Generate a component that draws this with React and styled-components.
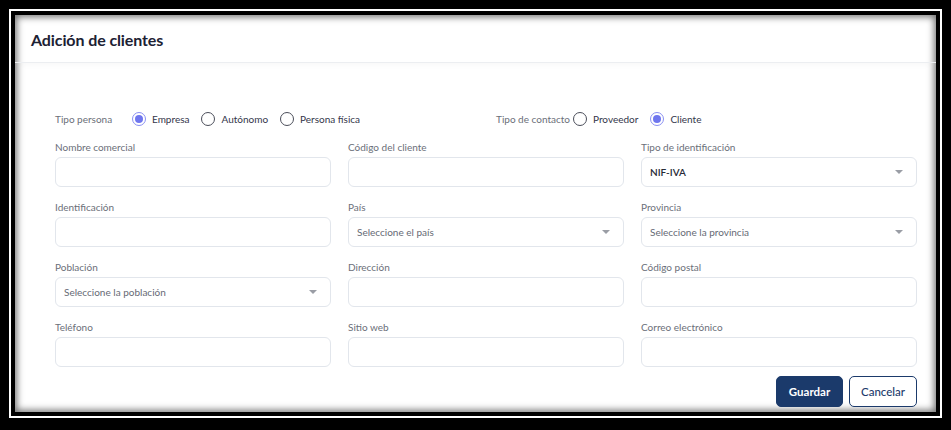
import React from 'react';
import styled, { createGlobalStyle } from 'styled-components';

const GlobalStyle = createGlobalStyle`
  html, body {
    margin: 0;
    padding: 0;
    background: #000;
  }
  body {
    font-family: 'Lato', 'Noto Sans', sans-serif;
  }
  * { box-sizing: border-box; }
`;

const Frame = styled.div`
  width: 933px;
  height: 409px;
  margin: 9px 9px 12px 9px;
  border: 2px solid #fff;
  background: #000;
  padding: 4px;
`;

const Panel = styled.div`
  height: 100%;
  background: #fff;
  box-shadow: inset 0 0 7px 2px rgba(0, 0, 0, 0.55);
  display: flex;
  flex-direction: column;
`;

const Header = styled.div`
  height: 48px;
  padding: 0 16px;
  display: flex;
  align-items: center;
  border-bottom: 1px solid #eceef1;
  box-shadow: 0 8px 6px -6px rgba(0, 0, 0, 0.03);
`;

const Title = styled.h1`
  margin: 2px 0 0;
  font-size: 16px;
  font-weight: 700;
  color: #1c2133;
  letter-spacing: -0.1px;
`;

const Body = styled.div`
  padding: 48px 19px 0 40px;
  display: flex;
  flex-direction: column;
`;

const RadioRow = styled.div`
  display: grid;
  grid-template-columns: 1fr 1fr;
  column-gap: 20px;
  height: 16px;
  margin-bottom: 13px;
`;

const RadioGroup = styled.div`
  display: flex;
  align-items: center;
`;

const GroupLabel = styled.span`
  font-size: 10px;
  color: #6b6f79;
  white-space: nowrap;
  flex: 0 0 ${(p) => p.width}px;
`;

const RadioOption = styled.label`
  display: flex;
  align-items: center;
  margin-right: 12px;
  font-size: 10px;
  color: #33364a;
  white-space: nowrap;
`;

const Circle = styled.span`
  width: 14px;
  height: 14px;
  border-radius: 50%;
  border: 1.4px solid ${(p) => (p.checked ? '#8a90f2' : '#4b4e5a')};
  margin-right: 6px;
  display: flex;
  align-items: center;
  justify-content: center;

  &::after {
    content: '';
    display: ${(p) => (p.checked ? 'block' : 'none')};
    width: 8px;
    height: 8px;
    border-radius: 50%;
    background: #6f76ee;
  }
`;

const Grid = styled.div`
  display: grid;
  grid-template-columns: repeat(3, 1fr);
  column-gap: 17px;
  row-gap: 13px;
`;

const Field = styled.div`
  display: flex;
  flex-direction: column;
`;

const Label = styled.span`
  font-size: 10px;
  line-height: 14px;
  color: #6b6f79;
  margin-bottom: 3px;
`;

const Input = styled.div`
  height: 30px;
  border: 1px solid #e2e6ec;
  border-radius: 6px;
  background: #fff;
  display: flex;
  align-items: center;
  padding: 0 13px 0 8px;
  font-size: 10px;
  color: ${(p) => (p.value ? '#272a36' : '#666a75')};
  font-weight: ${(p) => (p.value ? 600 : 400)};
`;

const Caret = styled.span`
  margin-left: auto;
  width: 0;
  height: 0;
  border-left: 4px solid transparent;
  border-right: 4px solid transparent;
  border-top: 4px solid #9a9da5;
`;

const Actions = styled.div`
  display: flex;
  justify-content: flex-end;
  gap: 6px;
  margin-top: 9px;
`;

const Button = styled.button`
  height: 31px;
  padding: 0 10px;
  border-radius: 5px;
  font-family: inherit;
  font-size: 11.5px;
  font-weight: ${(p) => (p.primary ? 700 : 500)};
  border: 1.5px solid #1b3a6b;
  background: ${(p) => (p.primary ? '#1b3a6b' : '#fff')};
  color: ${(p) => (p.primary ? '#fff' : '#1b3a6b')};
  width: ${(p) => p.width}px;
`;

const fields = [
  { label: 'Nombre comercial' },
  { label: 'Código del cliente' },
  { label: 'Tipo de identificación', value: 'NIF-IVA', select: true },
  { label: 'Identificación' },
  { label: 'País', placeholder: 'Seleccione el país', select: true },
  { label: 'Provincia', placeholder: 'Seleccione la provincia', select: true },
  { label: 'Población', placeholder: 'Seleccione la población', select: true },
  { label: 'Dirección' },
  { label: 'Código postal' },
  { label: 'Teléfono' },
  { label: 'Sitio web' },
  { label: 'Correo electrónico' },
];

function Radio({ checked, children }) {
  return (
    <RadioOption>
      <Circle checked={checked} />
      {children}
    </RadioOption>
  );
}

export default function App() {
  return (
    <>
      <GlobalStyle />
      <Frame>
        <Panel>
          <Header>
            <Title>Adición de clientes</Title>
          </Header>
          <Body>
            <RadioRow>
              <RadioGroup>
                <GroupLabel width={77}>Tipo persona</GroupLabel>
                <Radio checked>Empresa</Radio>
                <Radio>Autónomo</Radio>
                <Radio>Persona física</Radio>
              </RadioGroup>
              <RadioGroup>
                <GroupLabel width={77}>Tipo de contacto</GroupLabel>
                <Radio>Proveedor</Radio>
                <Radio checked>Cliente</Radio>
              </RadioGroup>
            </RadioRow>
            <Grid>
              {fields.map((f) => (
                <Field key={f.label}>
                  <Label>{f.label}</Label>
                  <Input value={f.value}>
                    {f.value || f.placeholder}
                    {f.select && <Caret />}
                  </Input>
                </Field>
              ))}
            </Grid>
            <Actions>
              <Button primary width={67}>Guardar</Button>
              <Button width={68}>Cancelar</Button>
            </Actions>
          </Body>
        </Panel>
      </Frame>
    </>
  );
}
